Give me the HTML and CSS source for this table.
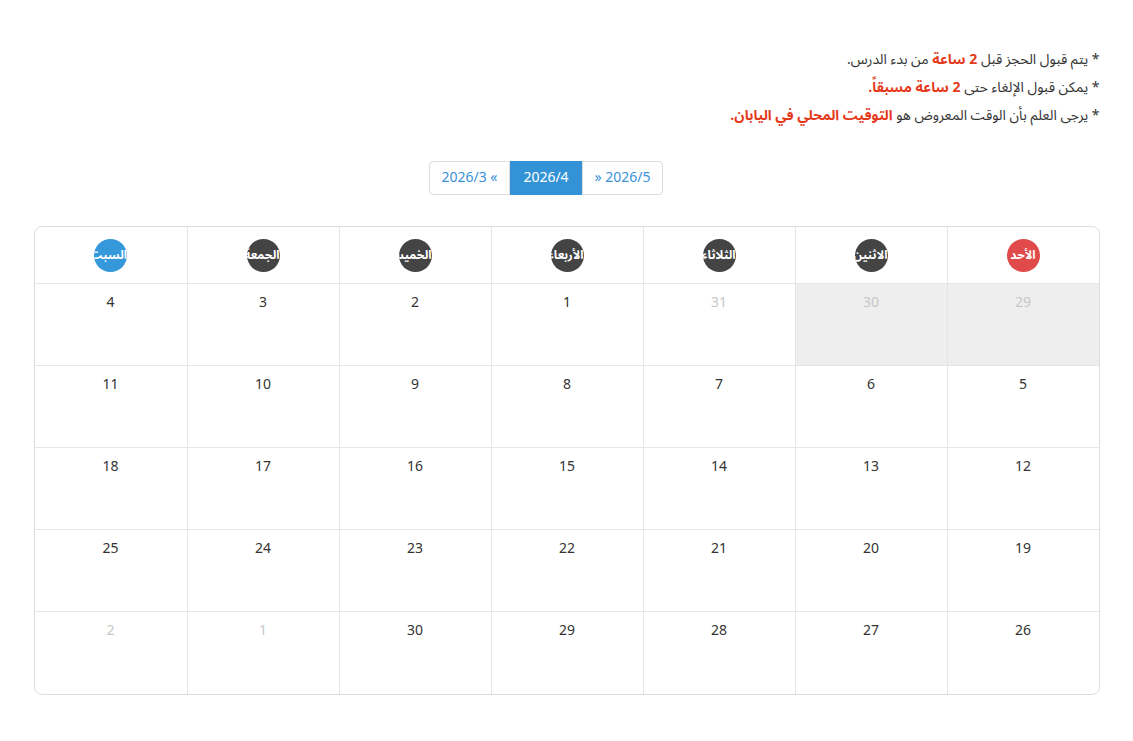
FILE: index.html
```html
<!DOCTYPE html>
<html lang="ar" dir="rtl">
<head>
<meta charset="utf-8">
<link rel="stylesheet" href="styles.css">
</head>
<body>
<div class="wrap">
  <div class="notes">
    <p>* يتم قبول الحجز قبل <b class="hl">2 ساعة</b> من بدء الدرس.</p>
    <p>* يمكن قبول الإلغاء حتى <b class="hl">2 ساعة مسبقاً.</b></p>
    <p>* يرجى العلم بأن الوقت المعروض هو <b class="hl">التوقيت المحلي في اليابان.</b></p>
  </div>
  <div class="pager">
    <a class="pg pg-first">» 2026/5</a>
    <a class="pg active">2026/4</a>
    <a class="pg pg-last">2026/3 «</a>
  </div>
  <div class="cal">
    <div class="row head">
      <div class="hc"><span class="dot sun">الأحد</span></div>
      <div class="hc"><span class="dot">الاثنين</span></div>
      <div class="hc"><span class="dot">الثلاثاء</span></div>
      <div class="hc"><span class="dot">الأربعاء</span></div>
      <div class="hc"><span class="dot">الخميس</span></div>
      <div class="hc"><span class="dot">الجمعة</span></div>
      <div class="hc"><span class="dot sat">السبت</span></div>
    </div>
    <div class="row">
      <div class="c past other">29</div>
      <div class="c past other">30</div>
      <div class="c other">31</div>
      <div class="c">1</div>
      <div class="c">2</div>
      <div class="c">3</div>
      <div class="c">4</div>
    </div>
    <div class="row">
      <div class="c">5</div><div class="c">6</div><div class="c">7</div><div class="c">8</div><div class="c">9</div><div class="c">10</div><div class="c">11</div>
    </div>
    <div class="row">
      <div class="c">12</div><div class="c">13</div><div class="c">14</div><div class="c">15</div><div class="c">16</div><div class="c">17</div><div class="c">18</div>
    </div>
    <div class="row">
      <div class="c">19</div><div class="c">20</div><div class="c">21</div><div class="c">22</div><div class="c">23</div><div class="c">24</div><div class="c">25</div>
    </div>
    <div class="row">
      <div class="c">26</div><div class="c">27</div><div class="c">28</div><div class="c">29</div><div class="c">30</div><div class="c other">1</div><div class="c other">2</div>
    </div>
  </div>
</div>
</body>
</html>
```
FILE: styles.css
```css
html, body {
  margin: 0;
  padding: 0;
  background: #fff;
}
body {
  font-family: "Noto Sans Arabic", "Noto Sans", "DejaVu Sans", sans-serif;
  color: #333;
  direction: rtl;
}
.wrap {
  width: 1066px;
  margin: 0 auto;
  padding-top: 46px;
}
.notes p {
  margin: 0;
  font-size: 14px;
  line-height: 28px;
  color: #333;
}
.hl {
  color: #e5391b;
  font-weight: bold;
}
.pager {
  display: flex;
  justify-content: center;
  margin-top: 31px;
  padding-right: 41px;
}
.pg {
  display: block;
  box-sizing: border-box;
  height: 34px;
  width: 81px;
  border: 1px solid #ddd;
  color: #3a92d8;
  font-size: 14px;
  line-height: 32px;
  text-align: center;
  direction: ltr;
  unicode-bidi: isolate;
}
.pg-first {
  border-radius: 0 4px 4px 0;
}
.pg-last {
  border-radius: 4px 0 0 4px;
}
.pg.active {
  width: 72px;
  background: #3393d6;
  border-color: #3393d6;
  color: #fff;
}
.cal {
  margin-top: 31px;
  border: 1px solid #ddd;
  border-radius: 8px;
  overflow: hidden;
}
.row {
  display: grid;
  grid-template-columns: repeat(7, 1fr);
  box-sizing: border-box;
  height: 82px;
  border-top: 1px solid #e6e6e6;
}
.row.head {
  height: 56px;
  border-top: none;
}
.row:last-child {
  height: 83px;
}
.hc, .c {
  border-left: 1px solid #e6e6e6;
}
.hc:last-child, .c:last-child {
  border-left: none;
}
.hc {
  display: flex;
  align-items: center;
  justify-content: center;
}
.dot {
  display: block;
  width: 33px;
  height: 33px;
  border-radius: 50%;
  background: #444;
  color: #fff;
  font-size: 12px;
  font-weight: bold;
  line-height: 33px;
  text-align: center;
  white-space: nowrap;
  overflow: hidden;
}
.dot.sun {
  background: #e04a4a;
}
.dot.sat {
  background: #3498db;
}
.c {
  text-align: center;
  font-size: 14px;
  line-height: 20px;
  padding-top: 9px;
  color: #333;
}
.c.other {
  color: #c8c8c8;
}
.c.past {
  background: #eee;
}
```
